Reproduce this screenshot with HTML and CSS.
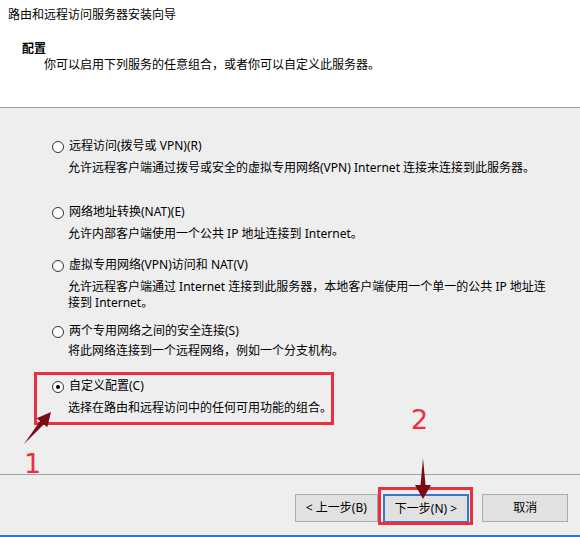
FILE: index.html
```html
<!DOCTYPE html>
<html lang="zh-CN">
<head>
<meta charset="utf-8">
<title>路由和远程访问服务器安装向导</title>
<link rel="stylesheet" href="styles.css">
</head>
<body>
<div class="wizard">
  <header class="head">
    <div class="title">路由和远程访问服务器安装向导</div>
    <div class="heading">配置</div>
    <div class="sub">你可以启用下列服务的任意组合，或者你可以自定义此服务器。</div>
  </header>

  <main class="body">
    <div class="option">
      <div class="opt-label"><span class="radio"></span><span>远程访问(拨号或 VPN)(R)</span></div>
      <div class="desc">允许远程客户端通过拨号或安全的虚拟专用网络(VPN) Internet 连接来连接到此服务器。</div>
    </div>
    <div class="option g2">
      <div class="opt-label"><span class="radio"></span><span>网络地址转换(NAT)(E)</span></div>
      <div class="desc">允许内部客户端使用一个公共 IP 地址连接到 Internet。</div>
    </div>
    <div class="option g3">
      <div class="opt-label"><span class="radio"></span><span>虚拟专用网络(VPN)访问和 NAT(V)</span></div>
      <div class="desc">允许远程客户端通过 Internet 连接到此服务器，本地客户端使用一个单一的公共 IP 地址连<br>接到 Internet。</div>
    </div>
    <div class="option g4">
      <div class="opt-label"><span class="radio"></span><span>两个专用网络之间的安全连接(S)</span></div>
      <div class="desc desc-tight">将此网络连接到一个远程网络，例如一个分支机构。</div>
    </div>
    <div class="option g5">
      <div class="opt-label"><span class="radio checked"></span><span>自定义配置(C)</span></div>
      <div class="desc">选择在路由和远程访问中的任何可用功能的组合。</div>
    </div>
  </main>

  <footer class="foot">
    <button class="btn">&lt; 上一步(B)</button>
    <button class="btn btn-default">下一步(N) &gt;</button>
    <button class="btn btn-cancel">取消</button>
  </footer>

  <div class="hl hl-option"></div>
  <div class="hl hl-next"></div>
  <div class="mark mark-1">1</div>
  <div class="mark mark-2">2</div>
  <svg class="arrows" width="580" height="537" viewBox="0 0 580 537" aria-hidden="true">
    <polygon points="24,444 43.9,424.3 47.3,427.2 51,412 36.7,418.2 40.1,421.1" fill="#7a0b16"/>
    <polygon points="423,458 425.5,485 431,485 423,499 415,485 420.5,485" fill="#7a0b16"/>
  </svg>
</div>
</body>
</html>
```

FILE: styles.css
```css
* { box-sizing: border-box; }

html, body {
  margin: 0;
  padding: 0;
}

body {
  font-family: "Noto Sans", "Noto Sans CJK SC", sans-serif;
  font-size: 12px;
  line-height: 16px;
  color: #000;
  background: #eeeeee;
}

.wizard {
  position: relative;
  width: 580px;
  height: 537px;
  display: flex;
  flex-direction: column;
  background: #eeeeee;
  overflow: hidden;
}

.head {
  height: 108px;
  background: #ffffff;
  border-bottom: 1px solid #a0a0a0;
  padding: 7px 0 0 8px;
}

.title {
  height: 16px;
  white-space: nowrap;
}

.heading {
  margin-top: 18px;
  padding-left: 14px;
  font-weight: bold;
  height: 16px;
}

.sub {
  padding-left: 36px;
  height: 16px;
  white-space: nowrap;
}

.body {
  height: 366px;
  padding: 30px 0 0 52px;
  display: flex;
  flex-direction: column;
}

.option {
  display: flex;
  flex-direction: column;
}

.g2 { margin-top: 28px; }
.g3 { margin-top: 15px; }
.g4 { margin-top: 12px; }
.g5 { margin-top: 19px; }

.opt-label {
  display: flex;
  align-items: center;
  gap: 5px;
  height: 16px;
  white-space: nowrap;
}

.radio {
  width: 12px;
  height: 12px;
  border-radius: 50%;
  border: 1px solid #333;
  background: #fff;
  display: flex;
  align-items: center;
  justify-content: center;
  flex: none;
  margin-top: 2px;
}

.radio.checked::after {
  content: "";
  width: 4px;
  height: 4px;
  border-radius: 50%;
  background: #000;
}

.desc {
  margin-top: 6px;
  padding-left: 16px;
  white-space: nowrap;
}

.desc-tight { margin-top: 4px; }

.foot {
  height: 63px;
  border-top: 1px solid #a0a0a0;
  border-bottom: 2px solid #2f74d6;
  padding: 19px 12px 0 295px;
  display: flex;
  align-items: flex-start;
}

.btn {
  font: inherit;
  color: #000;
  height: 28px;
  background: #e1e1e1;
  border: 1px solid #adadad;
  padding: 0;
  width: 83px;
  display: flex;
  align-items: center;
  justify-content: center;
}

.btn-default {
  margin-left: 5px;
  width: 87px;
  height: 29px;
  border: 2px solid #3b74d2;
}

.btn-cancel {
  margin-left: 13px;
  width: 86px;
}

.hl {
  position: absolute;
  border: 3px solid #e8303f;
}

.hl-option {
  left: 34px;
  top: 372px;
  width: 300px;
  height: 53px;
}

.hl-next {
  left: 378px;
  top: 487px;
  width: 95px;
  height: 38px;
}

.mark {
  position: absolute;
  font-family: "DejaVu Sans", sans-serif;
  font-size: 27px;
  line-height: 28px;
  color: #e8303f;
}

.mark-1 {
  left: 24px;
  top: 450px;
}

.mark-2 {
  left: 411px;
  top: 406px;
}

.arrows {
  position: absolute;
  left: 0;
  top: 0;
  pointer-events: none;
}
```
